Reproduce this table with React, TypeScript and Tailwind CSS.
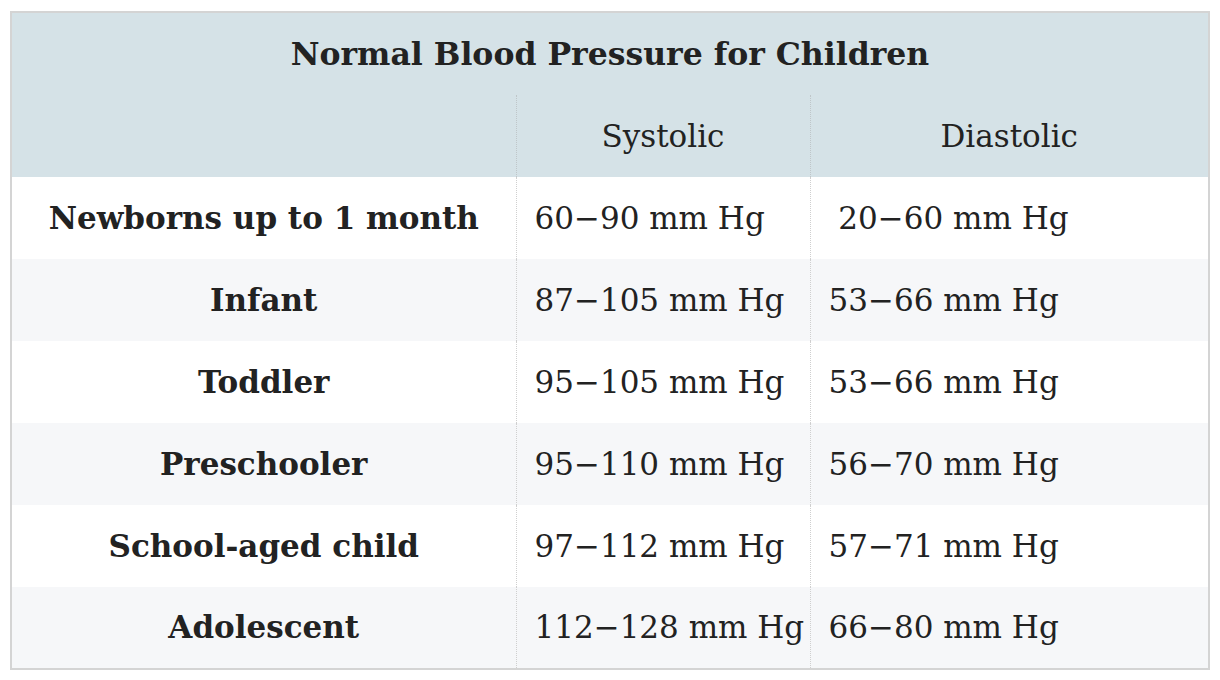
import React from "react";

type Row = { label: string; sys: string; dia: string };

const rows: Row[] = [
  { label: "Newborns up to 1 month", sys: "60−90 mm Hg", dia: "\u00a020−60 mm Hg" },
  { label: "Infant", sys: "87−105 mm Hg", dia: "53−66 mm Hg" },
  { label: "Toddler", sys: "95−105 mm Hg", dia: "53−66 mm Hg" },
  { label: "Preschooler", sys: "95−110 mm Hg", dia: "56−70 mm Hg" },
  { label: "School-aged child", sys: "97−112 mm Hg", dia: "57−71 mm Hg" },
  { label: "Adolescent", sys: "112−128 mm Hg", dia: "66−80 mm Hg" },
];

export default function App() {
  return (
    <div className="w-[1220px] h-[680px] bg-white pt-[11px] pl-[10px] font-['DejaVu_Serif',serif] text-[#222]">
      <table className="w-[1200px] border-collapse border-2 border-[#d4d4d4] table-fixed">
        <colgroup>
          <col className="w-[505px]" />
          <col className="w-[294px]" />
          <col />
        </colgroup>
        <thead className="bg-[#d5e2e7]">
          <tr className="h-[83px]">
            <th colSpan={3} className="text-[31.5px] font-bold text-center align-middle">
              Normal Blood Pressure for Children
            </th>
          </tr>
          <tr className="h-[82px]">
            <th />
            <th className="border-l border-dotted border-[#bfc6c9] text-[31px] font-normal text-center">
              Systolic
            </th>
            <th className="border-l border-dotted border-[#bfc6c9] text-[31px] font-normal text-center">
              Diastolic
            </th>
          </tr>
        </thead>
        <tbody>
          {rows.map((r, i) => (
            <tr key={r.label} className={i % 2 === 0 ? "h-[82px] bg-white" : "h-[82px] bg-[#f6f7f9]"}>
              <td className="text-center text-[31px] font-bold whitespace-nowrap">{r.label}</td>
              <td className="border-l border-dotted border-[#cfcfcf] pl-[18px] text-[31px] whitespace-nowrap">
                {r.sys}
              </td>
              <td className="border-l border-dotted border-[#cfcfcf] pl-[18px] text-[31px] whitespace-nowrap">
                {r.dia}
              </td>
            </tr>
          ))}
        </tbody>
      </table>
    </div>
  );
}
